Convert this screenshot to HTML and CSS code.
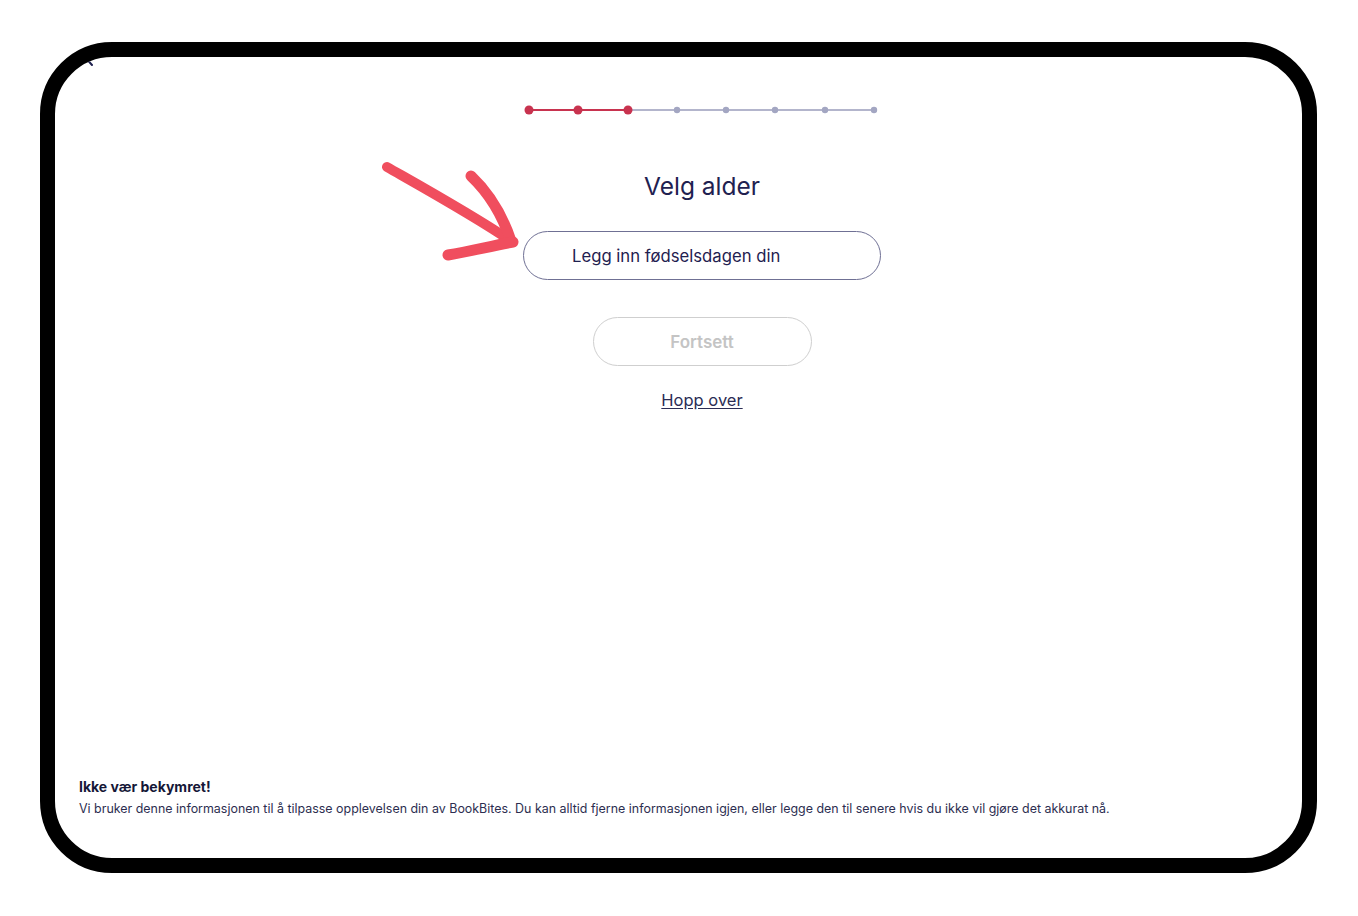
FILE: index.html
```html
<!DOCTYPE html>
<html lang="nb">
<head>
    <meta charset="UTF-8">
    <meta name="viewport" content="width=device-width, initial-scale=1.0">
    <title>Velg alder - BookBites</title>
    <link rel="stylesheet" href="styles.css">
</head>
<body>
    <div class="device">
        <div class="screen">
            <button class="back-btn" aria-label="Tilbake">
                <svg width="14" height="22" viewBox="0 0 14 22"><path d="M11 2 L3 11 L11 20" fill="none" stroke="#1f2150" stroke-width="2" stroke-linecap="round"/></svg>
            </button>

            <main class="main">
                <svg class="progress" width="356" height="12" viewBox="0 0 356 12">
                    <line x1="5" y1="6" x2="104" y2="6" stroke="#c8334f" stroke-width="2"/>
                    <line x1="104" y1="6" x2="350" y2="6" stroke="#b3b5cc" stroke-width="2"/>
                    <circle cx="5" cy="6" r="4.5" fill="#c8334f"/>
                    <circle cx="54" cy="6" r="4.5" fill="#c8334f"/>
                    <circle cx="104" cy="6" r="4.5" fill="#c8334f"/>
                    <circle cx="153" cy="6" r="3.2" fill="#a3a6c2"/>
                    <circle cx="202" cy="6" r="3.2" fill="#a3a6c2"/>
                    <circle cx="251" cy="6" r="3.2" fill="#a3a6c2"/>
                    <circle cx="301" cy="6" r="3.2" fill="#a3a6c2"/>
                    <circle cx="350" cy="6" r="3.2" fill="#a3a6c2"/>
                </svg>

                <h1 class="title">Velg alder</h1>

                <div class="field-wrap">
                    <svg class="arrow" width="150" height="110" viewBox="0 0 150 110">
                        <path d="M6 10 C 50 35, 95 60, 130 84" fill="none" stroke="#f04e5e" stroke-width="10" stroke-linecap="round"/>
                        <path d="M90 19 C 108 36, 122 60, 130 84" fill="none" stroke="#f04e5e" stroke-width="11" stroke-linecap="round"/>
                        <path d="M67 98 C 90 94, 110 89, 132 85" fill="none" stroke="#f04e5e" stroke-width="11" stroke-linecap="round"/>
                    </svg>
                    <button class="birthday-input">Legg inn fødselsdagen din</button>
                </div>

                <button class="continue-btn" disabled>Fortsett</button>

                <a class="skip-link" href="#">Hopp over</a>
            </main>

            <footer class="note">
                <h2>Ikke vær bekymret!</h2>
                <p>Vi bruker denne informasjonen til å tilpasse opplevelsen din av BookBites. Du kan alltid fjerne informasjonen igjen, eller legge den til senere hvis du ikke vil gjøre det akkurat nå.</p>
            </footer>
        </div>
    </div>
</body>
</html>
```

FILE: styles.css
```css
body {
    margin: 0;
    padding: 42px 41px 0 40px;
    background: #ffffff;
    font-family: Inter, "Noto Sans", sans-serif;
    color: #1f2150;
}
.device {
    height: 831px;
    box-sizing: border-box;
    border: 15px solid #000000;
    border-radius: 72px;
    overflow: hidden;
    background: #ffffff;
}
.screen {
    position: relative;
    height: 100%;
    display: flex;
    flex-direction: column;
}
.back-btn {
    position: absolute;
    left: 26px;
    top: -12px;
    padding: 0;
    border: none;
    background: none;
}
.main {
    flex: 1;
    display: flex;
    flex-direction: column;
    align-items: center;
    padding-top: 47px;
    padding-left: 47px;
}
.progress {
    display: block;
}
.title {
    margin: 55px 0 0;
    font-size: 24.5px;
    font-weight: 400;
    line-height: 30px;
    color: #1f2150;
}
.field-wrap {
    position: relative;
    margin-top: 30px;
}
.arrow {
    position: absolute;
    left: -142px;
    top: -74px;
}
.birthday-input {
    display: block;
    width: 358px;
    height: 49px;
    box-sizing: border-box;
    padding: 0 0 0 48px;
    border: 1px solid #6f7094;
    border-radius: 25px;
    background: #ffffff;
    font-family: inherit;
    font-size: 16.7px;
    color: #1f2150;
    text-align: left;
}
.continue-btn {
    margin-top: 37px;
    width: 219px;
    height: 49px;
    border: 1px solid #cfcfcf;
    border-radius: 25px;
    background: #ffffff;
    font-family: inherit;
    font-size: 17px;
    font-weight: 600;
    color: #c4c4c4;
}
.skip-link {
    margin-top: 24px;
    font-size: 16.5px;
    color: #2b2d55;
    text-decoration: underline;
    text-underline-offset: 2px;
}
.note {
    padding: 0 24px 42px;
}
.note h2 {
    margin: 0 0 6px;
    font-size: 14px;
    font-weight: 700;
    color: #151737;
}
.note p {
    margin: 0;
    font-size: 12.45px;
    color: #2c2e50;
}
```
